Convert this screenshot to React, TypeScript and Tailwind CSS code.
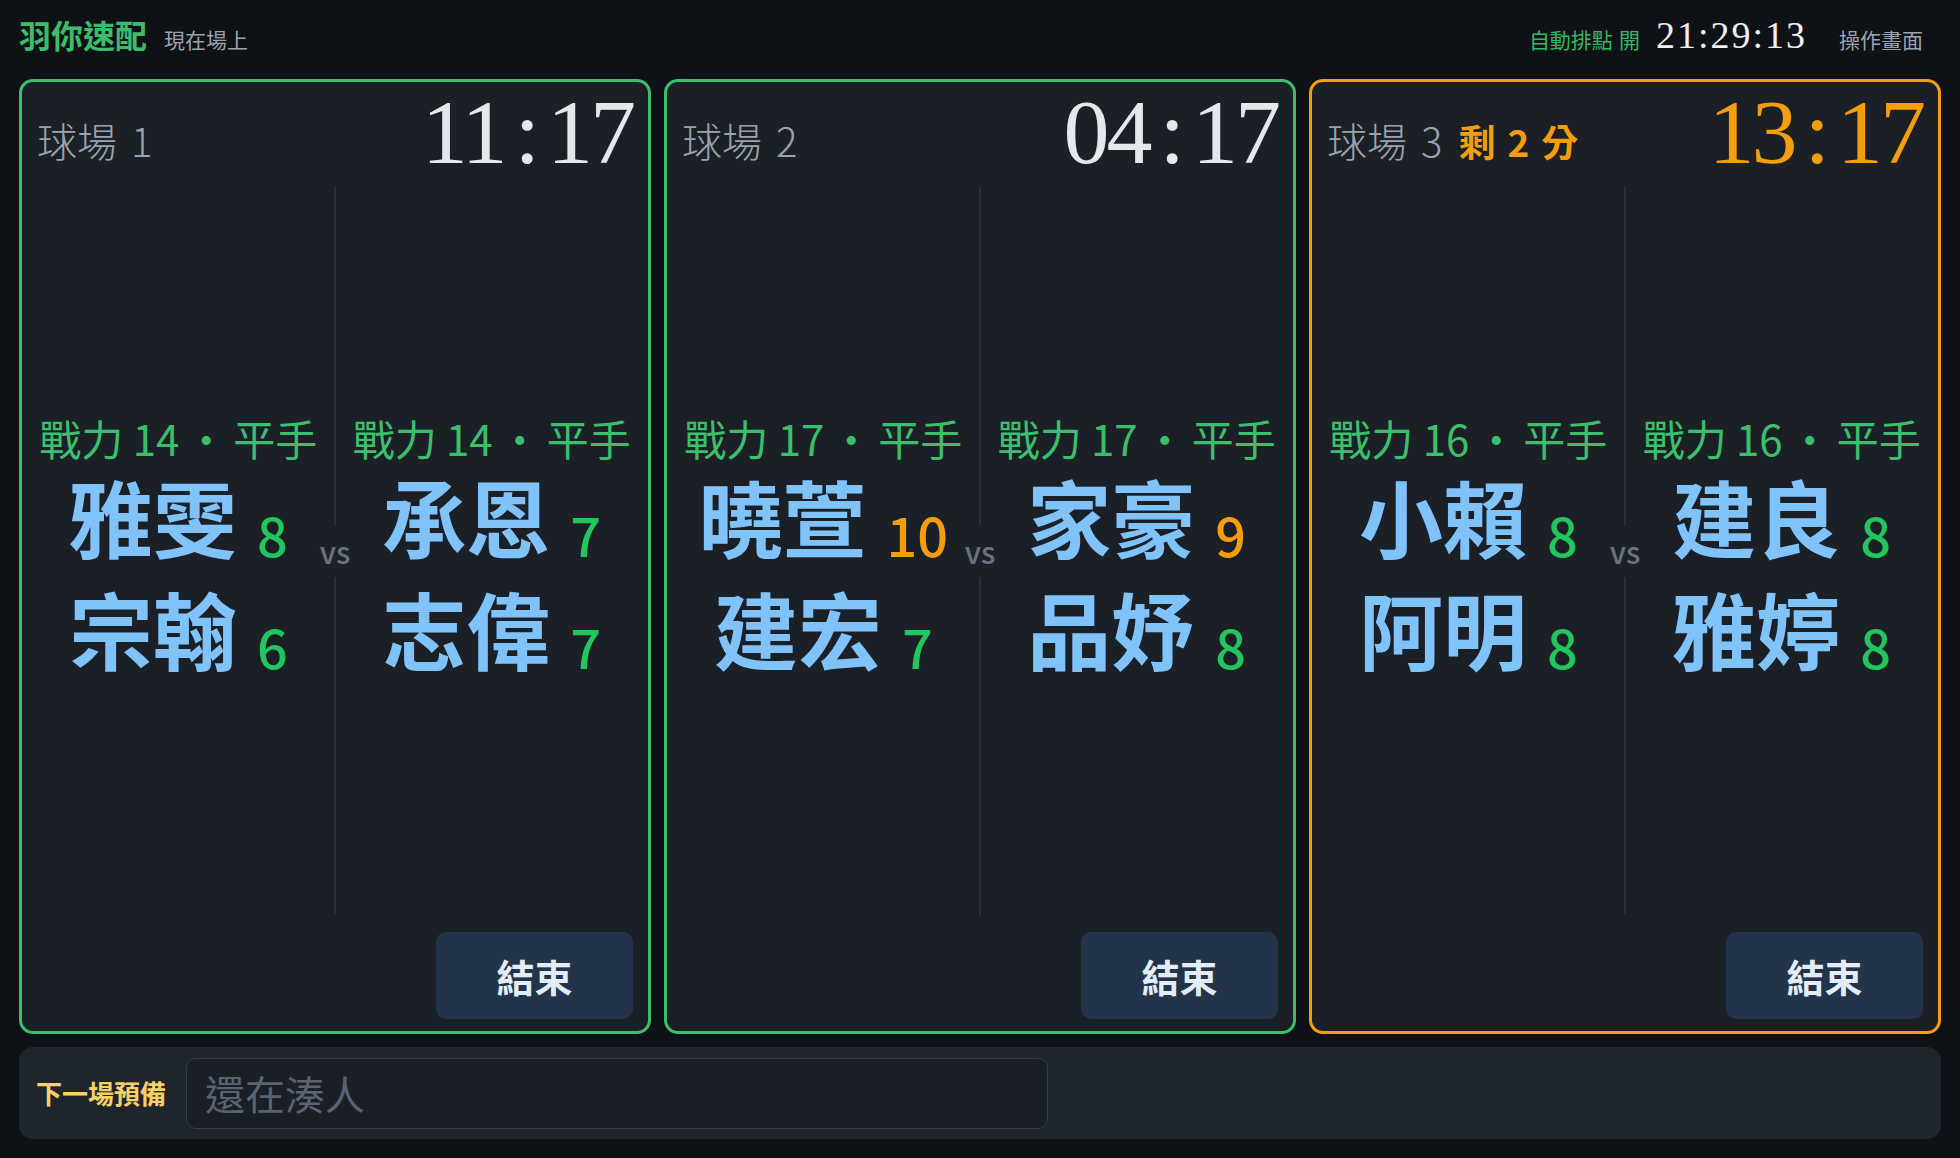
import React from "react";

type Player = { name: string; score: number };
type Team = { power: number; players: Player[] };
type Court = { id: number; time: string; warn?: string; teams: [Team, Team] };

const courts: Court[] = [
  {
    id: 1,
    time: "11:17",
    teams: [
      { power: 14, players: [{ name: "雅雯", score: 8 }, { name: "宗翰", score: 6 }] },
      { power: 14, players: [{ name: "承恩", score: 7 }, { name: "志偉", score: 7 }] },
    ],
  },
  {
    id: 2,
    time: "04:17",
    teams: [
      { power: 17, players: [{ name: "曉萱", score: 10 }, { name: "建宏", score: 7 }] },
      { power: 17, players: [{ name: "家豪", score: 9 }, { name: "品妤", score: 8 }] },
    ],
  },
  {
    id: 3,
    time: "13:17",
    warn: "剩 2 分",
    teams: [
      { power: 16, players: [{ name: "小賴", score: 8 }, { name: "阿明", score: 8 }] },
      { power: 16, players: [{ name: "建良", score: 8 }, { name: "雅婷", score: 8 }] },
    ],
  },
];

function TeamColumn({ team }: { team: Team }) {
  return (
    <div className="flex-1 min-w-0 flex flex-col items-center justify-center pb-[16px]">
      <div className="text-[42px] leading-none text-[#3cbf6c] whitespace-nowrap">
        戰力 {team.power}
        <span className="mx-[6px]">·</span>
        平手
      </div>
      <div className="mt-[15px] flex flex-col items-center gap-[28px]">
        {team.players.map((p) => (
          <div key={p.name} className="flex items-end justify-center gap-[20px] whitespace-nowrap">
            <span className="text-[84px] leading-none font-bold text-[#80c2fa]">{p.name}</span>
            <span
              className={
                p.score >= 9
                  ? "-mb-[3px] text-[54px] leading-none font-medium text-[#f59e0b]"
                  : "-mb-[3px] text-[54px] leading-none font-medium text-[#22c55e]"
              }
            >
              {p.score}
            </span>
          </div>
        ))}
      </div>
    </div>
  );
}

function CourtCard({ court }: { court: Court }) {
  const warn = !!court.warn;
  return (
    <div
      className={
        warn
          ? "flex-1 min-w-0 flex flex-col rounded-[14px] border-[3px] border-[#f59e0b] bg-[#1b1f26] px-[15px] pt-[4px] pb-[12px]"
          : "flex-1 min-w-0 flex flex-col rounded-[14px] border-[3px] border-[#3bbf6d] bg-[#1b1f26] px-[15px] pt-[4px] pb-[12px]"
      }
    >
      <div className="flex justify-between items-start">
        <div className="mt-[34px] flex items-baseline gap-[16px] leading-none whitespace-nowrap">
          <span className="text-[40px] leading-none font-light text-[#9ca3af]">
            球場<span className="ml-[14px]">{court.id}</span>
          </span>
          {warn && (
            <span className="text-[37px] leading-none font-bold text-[#f59e0b]">
              剩<span className="mx-[12px]">2</span>分
            </span>
          )}
        </div>
        <div
          className={
            warn
              ? "font-['Liberation_Serif',serif] text-[92px] leading-none tracking-[-3px] text-[#f59e0b] whitespace-nowrap"
              : "font-['Liberation_Serif',serif] text-[92px] leading-none tracking-[-3px] text-[#e5e7eb] whitespace-nowrap"
          }
        >
          {court.time.split(":")[0]}
          <span className="mx-[10px]">:</span>
          {court.time.split(":")[1]}
        </div>
      </div>
      <div className="mt-[9px] flex-1 flex">
        <TeamColumn team={court.teams[0]} />
        <div className="flex flex-col items-center">
          <div className="flex-1 w-[2px] bg-[#2a3039]" />
          <span className="py-[11px] text-[30px] leading-none font-medium text-[#6b7280]">vs</span>
          <div className="flex-1 w-[2px] bg-[#2a3039]" />
        </div>
        <TeamColumn team={court.teams[1]} />
      </div>
      <div className="mt-[17px] flex justify-end">
        <button className="w-[197px] h-[87px] rounded-[10px] bg-[#22334a] text-[38px] font-bold text-[#e3edf8] leading-none">
          結束
        </button>
      </div>
    </div>
  );
}

export default function App() {
  return (
    <div className="w-[1960px] h-[1158px] bg-[#0e1116] flex flex-col px-[19px] pb-[19px] font-['Noto_Sans_CJK_TC','Noto_Sans',sans-serif] overflow-hidden">
      <header className="h-[79px] pt-[16px] flex items-baseline justify-between">
        <div className="flex items-baseline gap-[17px]">
          <span className="text-[32px] leading-none font-bold text-[#3dbd6b]">羽你速配</span>
          <span className="text-[21px] leading-none text-[#9ca3af]">現在場上</span>
        </div>
        <div className="flex items-baseline gap-4">
          <span className="text-[21px] leading-none text-[#33b866]">
            自動排點<span className="ml-[6px]">開</span>
          </span>
          <span className="font-['Liberation_Serif',serif] text-[38px] leading-none tracking-[2px] text-[#eef0f3]">
            21:29:13
          </span>
          <span className="pl-[16px] pr-[18px] text-[21px] leading-none text-[#9ca3af]">操作畫面</span>
        </div>
      </header>
      <div className="flex-1 min-h-0 flex gap-[13px]">
        {courts.map((c) => (
          <CourtCard key={c.id} court={c} />
        ))}
      </div>
      <div className="mt-[13px] h-[92px] rounded-[14px] bg-[#1f252d] flex items-center pl-[17px] pr-4 gap-[20px]">
        <span className="text-[26px] leading-none font-bold text-[#f8d165] whitespace-nowrap">下一場預備</span>
        <input
          readOnly
          placeholder="還在湊人"
          className="w-[862px] h-[71px] rounded-[10px] border-[1.5px] border-[#343c47] bg-[#1a1f26] px-[18px] text-[40px] text-[#d1d5db] placeholder:text-[#5b6370] outline-none"
        />
      </div>
    </div>
  );
}
